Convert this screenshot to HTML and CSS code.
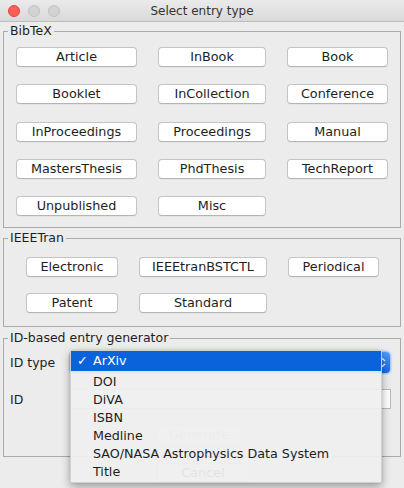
FILE: index.html
```html
<!DOCTYPE html>
<html>
<head>
<meta charset="utf-8">
<title>Select entry type</title>
<link rel="stylesheet" href="styles.css">
</head>
<body>
<div class="window">
  <div class="titlebar">
    <div class="lights">
      <span class="light close"></span>
      <span class="light"></span>
      <span class="light"></span>
    </div>
    <div class="title">Select entry type</div>
    <div></div>
  </div>

  <div class="content">
    <fieldset class="group bibtex">
      <legend>BibTeX</legend>
      <div class="grid">
        <button class="btn">Article</button>
        <button class="btn">InBook</button>
        <button class="btn">Book</button>
        <button class="btn">Booklet</button>
        <button class="btn">InCollection</button>
        <button class="btn">Conference</button>
        <button class="btn">InProceedings</button>
        <button class="btn">Proceedings</button>
        <button class="btn">Manual</button>
        <button class="btn">MastersThesis</button>
        <button class="btn">PhdThesis</button>
        <button class="btn">TechReport</button>
        <button class="btn">Unpublished</button>
        <button class="btn">Misc</button>
      </div>
    </fieldset>

    <fieldset class="group ieee">
      <legend>IEEETran</legend>
      <div class="grid">
        <button class="btn">Electronic</button>
        <button class="btn">IEEEtranBSTCTL</button>
        <button class="btn">Periodical</button>
        <button class="btn">Patent</button>
        <button class="btn">Standard</button>
      </div>
    </fieldset>

    <fieldset class="group idgen">
      <legend>ID-based entry generator</legend>
      <div class="form">
        <div class="label">ID type</div>
        <div class="combo">
          <svg class="arrows" width="7" height="11" viewBox="0 0 7 11">
            <path d="M1 4 L3.5 1.5 L6 4 M1 7 L3.5 9.5 L6 7" fill="none" stroke="#fff" stroke-width="1.2"/>
          </svg>
        </div>
        <div class="label">ID</div>
        <div class="field"></div>
      </div>
      <div class="actions">
        <button class="btn disabled gen">Generate</button>
      </div>
    </fieldset>

    <div class="footer">
      <button class="btn cancel">Cancel</button>
    </div>
  </div>

  <div class="popup">
    <div class="item selected"><span class="check">✓</span>ArXiv</div>
    <div class="item"><span class="check"></span>DOI</div>
    <div class="item"><span class="check"></span>DiVA</div>
    <div class="item"><span class="check"></span>ISBN</div>
    <div class="item"><span class="check"></span>Medline</div>
    <div class="item"><span class="check"></span>SAO/NASA Astrophysics Data System</div>
    <div class="item"><span class="check"></span>Title</div>
  </div>
</div>
</body>
</html>
```

FILE: styles.css
```css
* { box-sizing: border-box; }

html, body {
  margin: 0;
  padding: 0;
  background: #ececec;
}

body {
  font-family: "DejaVu Sans", "Liberation Sans", sans-serif;
  font-size: 12.6px;
  color: #1e1e1e;
}

.window {
  position: relative;
  width: 404px;
  height: 488px;
  background: #ececec;
  overflow: hidden;
}

.titlebar {
  height: 22px;
  display: grid;
  grid-template-columns: 1fr auto 1fr;
  align-items: center;
  background: linear-gradient(#ebebeb, #d9d9d9);
  border-bottom: 1px solid #bdbdbd;
}

.lights {
  display: flex;
  gap: 8px;
  padding-left: 8px;
}

.light {
  width: 12px;
  height: 12px;
  border-radius: 50%;
  background: #d3d3d3;
  border: 1px solid #c2c2c2;
}

.light.close {
  background: #fc5f57;
  border-color: #df4744;
}

.title {
  font-size: 12px;
  color: #333;
  line-height: 14px;
}

.content {
  display: flex;
  flex-direction: column;
}

.group {
  margin: 0 3px;
  border: 1px solid #aaaaaa;
  min-width: 0;
}

.group legend {
  padding: 0 2px;
  line-height: 14px;
  height: 14px;
  font-size: 12.5px;
  color: #1e1e1e;
}

.bibtex {
  margin-top: 2px;
  padding: 9px 4px 11px;
}

.ieee {
  margin-top: 3px;
  padding: 12px 4px 13px;
}

.idgen {
  margin-top: 4px;
  padding: 7px 4px 12px;
}

.grid {
  display: grid;
  column-gap: 21px;
}

.bibtex .grid {
  padding-left: 8px;
  grid-template-columns: 121px 108px 101px;
  grid-auto-rows: 20px;
  row-gap: 17.25px;
}

.ieee .grid {
  padding-left: 18px;
  grid-template-columns: 92px 128px 91px;
  grid-auto-rows: 20px;
  row-gap: 16px;
}

.btn {
  font-family: "DejaVu Sans", "Liberation Sans", sans-serif;
  font-size: 12.8px;
  color: #1e1e1e;
  background: #ffffff;
  border: 1px solid #c4c4c4;
  border-bottom-color: #b4b4b4;
  border-radius: 4px;
  padding: 0;
  margin: 0;
  height: 20px;
  line-height: 18px;
  text-align: center;
  box-shadow: 0 0.5px 0.5px rgba(0,0,0,0.06);
}

.form {
  display: grid;
  grid-template-columns: 62px 321px;
  grid-template-rows: 21px 20px;
  row-gap: 16px;
  align-items: center;
}

.label {
  padding-left: 2px;
  font-size: 12.5px;
}

.combo {
  width: 320px;
  height: 21px;
  border-radius: 4px;
  background: linear-gradient(#4d9df8, #1368ee);
  box-shadow: 0 0 2px 1px rgba(80, 150, 245, 0.55);
  display: flex;
  align-items: center;
  justify-content: flex-end;
  padding: 0 4px 0 8px;
}

.arrows { display: block; }

.field {
  width: 321px;
  height: 20px;
  background: #fff;
  border: 1px solid #b9b9b9;
}

.actions {
  display: flex;
  justify-content: center;
  margin-top: 16px;
  padding-right: 6px;
}

.gen {
  width: 86px;
  height: 19px;
  line-height: 17px;
}

.btn.disabled {
  color: #b0b0b0;
  border-color: #d6d6d6;
}

.footer {
  display: flex;
  justify-content: center;
  margin-top: 6px;
  padding-left: 2px;
}

.cancel {
  width: 93px;
  height: 19px;
  line-height: 17px;
}

.popup {
  position: absolute;
  left: 70px;
  top: 350px;
  width: 312px;
  height: 133px;
  padding: 0 0 1px;
  background: rgba(239, 239, 239, 0.94);
  border: 1px solid rgba(0, 0, 0, 0.12);
  border-radius: 2px;
  box-shadow: 0 4px 10px rgba(0, 0, 0, 0.32), 0 0 2px rgba(0,0,0,0.15);
  display: flex;
  flex-direction: column;
}

.item {
  height: 18px;
  line-height: 18px;
  display: flex;
  align-items: center;
  font-size: 12.7px;
  color: #1e1e1e;
  white-space: nowrap;
}

.item.selected {
  height: 20px;
  margin-bottom: 2px;
  background: #0b63dc;
  color: #ffffff;
}

.check {
  width: 22px;
  padding-left: 6px;
  flex: none;
}
```
